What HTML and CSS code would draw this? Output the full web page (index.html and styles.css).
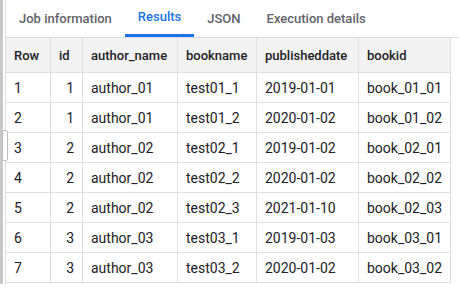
FILE: index.html
```html
<!DOCTYPE html>
<html>
<head>
<meta charset="utf-8">
<link rel="stylesheet" href="styles.css">
</head>
<body>
<div class="page">
  <div class="gutter"></div>
  <div class="handle"></div>
  <div class="main">
    <div class="tabs">
      <div class="tab">Job information</div>
      <div class="tab active">Results</div>
      <div class="tab">JSON</div>
      <div class="tab">Execution details</div>
    </div>
    <div class="grid">
      <div class="th">Row</div><div class="th">id</div><div class="th">author_name</div><div class="th">bookname</div><div class="th">publisheddate</div><div class="th">bookid</div>

      <div class="td">1</div><div class="td num">1</div><div class="td">author_01</div><div class="td">test01_1</div><div class="td">2019-01-01</div><div class="td">book_01_01</div>
      <div class="td">2</div><div class="td num">1</div><div class="td">author_01</div><div class="td">test01_2</div><div class="td">2020-01-02</div><div class="td">book_01_02</div>
      <div class="td">3</div><div class="td num">2</div><div class="td">author_02</div><div class="td">test02_1</div><div class="td">2019-01-02</div><div class="td">book_02_01</div>
      <div class="td">4</div><div class="td num">2</div><div class="td">author_02</div><div class="td">test02_2</div><div class="td">2020-01-02</div><div class="td">book_02_02</div>
      <div class="td">5</div><div class="td num">2</div><div class="td">author_02</div><div class="td">test02_3</div><div class="td">2021-01-10</div><div class="td">book_02_03</div>
      <div class="td">6</div><div class="td num">3</div><div class="td">author_03</div><div class="td">test03_1</div><div class="td">2019-01-03</div><div class="td">book_03_01</div>
      <div class="td">7</div><div class="td num">3</div><div class="td">author_03</div><div class="td">test03_2</div><div class="td">2020-01-02</div><div class="td">book_03_02</div>
    </div>
  </div>
</div>
</body>
</html>
```
FILE: styles.css
```css
html, body {
  margin: 0;
  padding: 0;
  background: #ffffff;
}
body {
  font-family: Roboto, "Liberation Sans", sans-serif;
  font-size: 14px;
  color: #202124;
  width: 459px;
  height: 284px;
  overflow: hidden;
}
.page {
  display: flex;
  position: relative;
  height: 284px;
}
.gutter {
  width: 3px;
  background: #c8c8c8;
  margin-right: 2px;
  flex: none;
}
.handle {
  position: absolute;
  left: 2px;
  top: 130px;
  width: 4px;
  height: 29px;
  background: #ffffff;
  border: 1px solid #bdbdbd;
  border-radius: 2px;
}
.main {
  flex: 1;
  border-left: 1px solid #dadce0;
}
.tabs {
  display: flex;
  height: 37px;
  border-bottom: 1px solid #dadce0;
}
.tab {
  padding: 0 13px;
  line-height: 37px;
  height: 37px;
  box-sizing: border-box;
  color: #5f6368;
  font-size: 13px;
  font-weight: 500;
  white-space: nowrap;
}
.tab.active {
  color: #1a73e8;
  border-bottom: 3px solid #1a73e8;
  line-height: 34px;
}
.grid {
  display: grid;
  grid-template-columns: 45px 32px 95px 79px 102px 92px;
  grid-template-rows: 35px repeat(7, 30px);
}
.th, .td {
  box-sizing: border-box;
  border-right: 1px solid #e0e0e0;
  border-bottom: 1px solid #e0e0e0;
  padding: 0 8px;
  display: flex;
  align-items: center;
  white-space: nowrap;
}
.th {
  background: #f3f3f3;
  font-size: 13px;
  font-weight: 500;
}
.num {
  justify-content: flex-end;
}
```
